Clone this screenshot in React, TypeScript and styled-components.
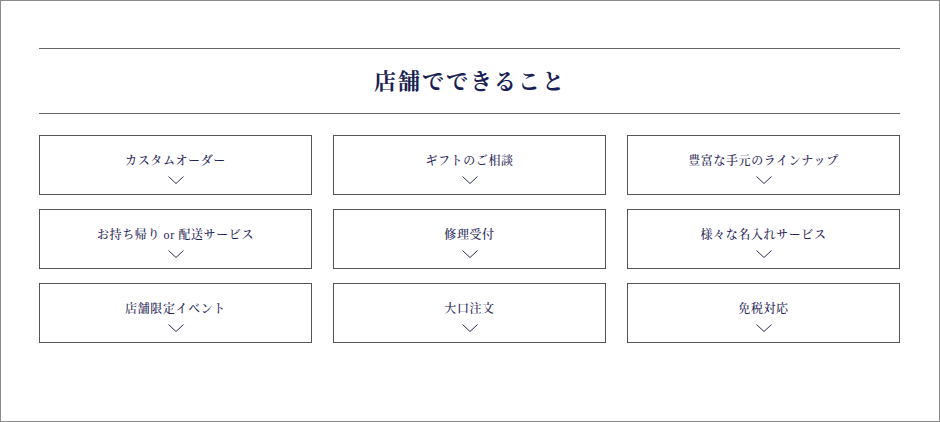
import React from 'react'
import styled, { createGlobalStyle } from 'styled-components'

const GlobalStyle = createGlobalStyle`
  html, body {
    margin: 0;
    padding: 0;
    background: #fff;
  }
  * {
    box-sizing: border-box;
  }
`

const items = [
  'カスタムオーダー',
  'ギフトのご相談',
  '豊富な手元のラインナップ',
  'お持ち帰り or 配送サービス',
  '修理受付',
  '様々な名入れサービス',
  '店舗限定イベント',
  '大口注文',
  '免税対応',
]

const App = () => {
  return (
    <>
      <GlobalStyle />
      <Frame>
        <Heading>
          <Title>店舗でできること</Title>
        </Heading>
        <Grid>
          {items.map((label) => (
            <Card key={label}>
              <Label>{label}</Label>
              <Chevron width="16" height="8" viewBox="0 0 16 8">
                <polyline points="0.5,0.5 8,7.5 15.5,0.5" />
              </Chevron>
            </Card>
          ))}
        </Grid>
      </Frame>
    </>
  )
}

const Frame = styled.section`
  width: 940px;
  height: 422px;
  border: 1px solid #8a8a8a;
  padding: 47px 39px 0 38px;
  font-family: 'Liberation Serif', 'Noto Serif CJK JP', 'Noto Sans CJK JP', serif;
  color: #1c2154;
`

const Heading = styled.div`
  height: 66px;
  border-top: 1px solid #666;
  border-bottom: 1px solid #666;
  display: flex;
  align-items: center;
  justify-content: center;
`

const Title = styled.h2`
  margin: 0;
  font-size: 22px;
  font-weight: 700;
  letter-spacing: 2px;
  line-height: 1;
  padding-left: 1px;
  padding-top: 2px;
  color: #1a1f55;
`

const Grid = styled.div`
  margin-top: 21px;
  display: grid;
  grid-template-columns: repeat(3, 1fr);
  column-gap: 21px;
  row-gap: 14px;
`

const Card = styled.div`
  height: 60px;
  border: 1px solid #555;
  display: flex;
  flex-direction: column;
  align-items: center;
  padding-top: 17px;
`

const Label = styled.span`
  font-size: 12px;
  line-height: 16px;
  letter-spacing: 0.6px;
  font-weight: 500;
  color: #1f2456;
`

const Chevron = styled.svg`
  margin-top: 7px;
  fill: none;
  stroke: #2a2e58;
  stroke-width: 1;
`

export default App
